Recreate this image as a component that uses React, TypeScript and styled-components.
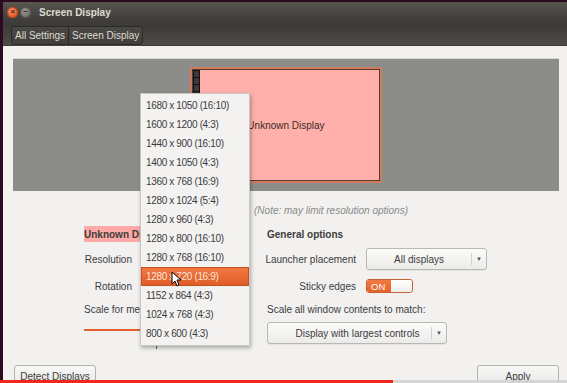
import React from 'react';
import styled, { createGlobalStyle } from 'styled-components';

const GlobalStyle = createGlobalStyle`
  html, body {
    margin: 0;
    padding: 0;
    overflow: hidden;
  }
  body {
    font-family: "Liberation Sans", Arial, sans-serif;
    font-size: 10px;
    color: #3c3c3c;
  }
`;

interface ICombo {
  width?: string;
  pad?: string;
}

const Desktop = styled.div`
  position: relative;
  width: 567px;
  height: 383px;
  overflow: hidden;
  background: #2c0a22;
  display: flex;
  padding: 2px 0 0 3px;
  box-sizing: border-box;
`;

const Window = styled.div`
  flex: 1;
  display: flex;
  flex-direction: column;
  background: #f2f1f0;
  margin-right: -1px;
`;

const TitleBar = styled.header`
  height: 46px;
  box-sizing: border-box;
  background: linear-gradient(#58564f 0%, #45433f 30%, #3c3b37 55%, #4e4c47 100%);
  border-bottom: 1px solid #3a3935;
  padding-left: 8px;
`;

const TitleRow = styled.div`
  height: 20px;
  display: flex;
  align-items: center;
  margin-left: -4px;
`;

const WinButton = styled.div<{ close?: boolean }>`
  width: 11px;
  height: 11px;
  border-radius: 50%;
  margin-right: 2px;
  display: flex;
  align-items: center;
  justify-content: center;
  background: ${p => p.close
    ? 'radial-gradient(circle at 40% 35%, #f8936a, #e4531f 70%)'
    : 'radial-gradient(circle at 40% 35%, #9a9892, #6f6d68 70%)'};
  box-shadow: inset 0 0 0 1px ${p => p.close ? '#b8441c' : '#55534e'};
  color: #3a2a20;
  font-size: 8px;
  font-weight: bold;
  line-height: 1;
`;

const Title = styled.span`
  margin-left: 6px;
  color: #dfdbd2;
  font-weight: bold;
  font-size: 10px;
`;

const Crumbs = styled.nav`
  margin-top: 4px;
  display: inline-flex;
  height: 19px;
  border: 1px solid #2b2a27;
  border-radius: 3px;
  box-sizing: border-box;
  background: linear-gradient(#4a4844, #403f3b);
  box-shadow: 0 1px 0 rgba(255,255,255,0.08);
`;

const Crumb = styled.span`
  display: flex;
  align-items: center;
  padding: 0 3px;
  color: #dfdbd2;
  & + & {
    border-left: 1px solid #2b2a27;
  }
`;

const Content = styled.main`
  flex: 1;
  display: flex;
  flex-direction: column;
  padding: 12px 9px 0 10px;
`;

const Preview = styled.section`
  height: 133px;
  box-sizing: border-box;
  background: #8c8c8b;
  border-top: 1px solid #d6d5d3;
  display: flex;
  align-items: center;
  justify-content: center;
`;

const Monitor = styled.div`
  width: 192px;
  height: 116px;
  box-sizing: border-box;
  background: #ffb0aa;
  border: 2px solid #cf7c5c;
  box-shadow: inset 0 0 0 1px #5a3a30;
  display: flex;
  position: relative;
  align-items: center;
  justify-content: center;
  color: #3c2a28;
`;

const Launcher = styled.div`
  position: absolute;
  left: 1px;
  top: 1px;
  width: 7px;
  display: flex;
  flex-direction: column;
  gap: 1px;
  background: #111;
  padding: 1px 0;
`;

const LaunchIcon = styled.div`
  height: 6px;
  margin: 0 1px;
  background: #3a3a3a;
`;

const MirrorRow = styled.div`
  margin-top: 11px;
  height: 16px;
  display: flex;
  align-items: center;
  padding-left: 150px;
  gap: 5px;
`;

const Check = styled.div`
  width: 12px;
  height: 12px;
  border: 1px solid #a8a6a2;
  border-radius: 2px;
  background: #fff;
`;

const Note = styled.span`
  margin-left: 2px;
  font-style: italic;
  color: #8a8987;
`;

const Columns = styled.div`
  margin-top: 8px;
  display: flex;
  padding-left: 71px;
  gap: 20px;
`;

const Grid = styled.div<{ cols: string; width?: string }>`
  width: ${p => p.width || 'auto'};
  display: grid;
  grid-template-columns: ${p => p.cols};
  grid-template-rows: 16px 22px 20px 14px 22px;
  row-gap: 6px;
  column-gap: 10px;
  align-items: center;
`;

const Header = styled.div<{ highlight?: boolean }>`
  grid-column: 1 / -1;
  font-weight: bold;
  height: 16px;
  display: flex;
  align-items: center;
  background: ${p => p.highlight ? '#ffaaa6' : 'transparent'};
`;

const Label = styled.div`
  justify-self: end;
  white-space: nowrap;
`;

const Wide = styled.div`
  grid-column: 1 / -1;
  white-space: nowrap;
`;

const ComboBox = styled.div<ICombo>`
  width: ${p => p.width || 'auto'};
  height: 22px;
  box-sizing: border-box;
  display: flex;
  border: 1px solid #bab8b4;
  border-radius: 3px;
  background: linear-gradient(#fbfbfa, #ecebe9);
  box-shadow: 0 1px 0 rgba(0,0,0,0.05);
`;

const ComboText = styled.div<ICombo>`
  flex: 1;
  display: flex;
  align-items: center;
  justify-content: center;
  padding-left: ${p => p.pad || '0'};
  white-space: nowrap;
  overflow: hidden;
`;

const ComboArrow = styled.div`
  width: 14px;
  margin: 4px 0;
  border-left: 1px solid #d4d2ce;
  display: flex;
  align-items: center;
  justify-content: center;
  color: #555;
  font-size: 6px;
`;

const Toggle = styled.div`
  width: 47px;
  height: 14px;
  box-sizing: border-box;
  display: flex;
  border: 1px solid #c7622f;
  border-radius: 3px;
  overflow: hidden;
`;

const ToggleOn = styled.div`
  width: 24px;
  background: linear-gradient(#f27a45, #e5602c);
  color: #fff;
  display: flex;
  align-items: center;
  padding-left: 4px;
  box-sizing: border-box;
  font-size: 9.5px;
`;

const ToggleKnob = styled.div`
  flex: 1;
  background: linear-gradient(#ffffff, #eeedeb);
  border-radius: 2px;
`;

const Slider = styled.div`
  grid-column: 1 / -1;
  align-self: start;
  display: flex;
  flex-direction: column;
`;

const Track = styled.div`
  margin-top: 7px;
  height: 2px;
  background: linear-gradient(to right, #e5602c 0 52%, #b8b6b2 52% 100%);
  width: 160px;
`;

const Tick = styled.div`
  margin: 12px 0 0 72px;
  width: 1px;
  height: 6px;
  background: #555;
`;

const ButtonRow = styled.footer`
  margin-top: 21px;
  display: flex;
  justify-content: space-between;
  padding-left: 1px;
`;

const Button = styled.button<{ width: string }>`
  width: ${p => p.width};
  height: 22px;
  font-family: inherit;
  font-size: 10px;
  color: #3c3c3c;
  border: 1px solid #b5b3ae;
  border-radius: 3px;
  background: linear-gradient(#f8f8f7, #e7e6e4);
  padding: 0;
`;

const Menu = styled.ul`
  position: absolute;
  left: 140px;
  top: 93px;
  width: 110px;
  margin: 0;
  padding: 2px 0;
  list-style: none;
  box-sizing: border-box;
  background: #f3f2f1;
  border: 1px solid #c9c7c3;
  box-shadow: 1px 2px 4px rgba(0,0,0,0.3);
`;

const Item = styled.li<{ active?: boolean }>`
  height: 19px;
  display: flex;
  align-items: center;
  padding-left: 5px;
  letter-spacing: -0.35px;
  white-space: nowrap;
  color: ${p => p.active ? '#fde6da' : '#3c3c3c'};
  background: ${p => p.active ? 'linear-gradient(#f27a45, #df5a26)' : 'transparent'};
  box-shadow: ${p => p.active ? 'inset 0 0 0 1px #c4531f' : 'none'};
`;

const Cursor = styled.svg`
  position: absolute;
  left: 171px;
  top: 271px;
`;

const Progress = styled.div`
  position: absolute;
  left: 0;
  right: 0;
  bottom: 0;
  height: 3px;
  display: flex;
  background: rgba(210, 210, 210, 0.85);
`;

const Played = styled.div<{ width: string }>`
  width: ${p => p.width};
  background: #f1261d;
`;

const resolutions = [
  '1680 x 1050 (16:10)',
  '1600 x 1200 (4:3)',
  '1440 x 900 (16:10)',
  '1400 x 1050 (4:3)',
  '1360 x 768 (16:9)',
  '1280 x 1024 (5:4)',
  '1280 x 960 (4:3)',
  '1280 x 800 (16:10)',
  '1280 x 768 (16:10)',
  '1280 x 720 (16:9)',
  '1152 x 864 (4:3)',
  '1024 x 768 (4:3)',
  '800 x 600 (4:3)',
];

const Combo = ({ text, width, pad }: { text: string; width?: string; pad?: string }) => (
  <ComboBox width={width}>
    <ComboText pad={pad}>{text}</ComboText>
    <ComboArrow>▼</ComboArrow>
  </ComboBox>
);

export default function App() {
  return (
    <>
      <GlobalStyle />
      <Desktop>
        <Window>
          <TitleBar>
            <TitleRow>
              <WinButton close>×</WinButton>
              <WinButton>−</WinButton>
              <Title>Screen Display</Title>
            </TitleRow>
            <Crumbs>
              <Crumb>All Settings</Crumb>
              <Crumb>Screen Display</Crumb>
            </Crumbs>
          </TitleBar>

          <Content>
            <Preview>
              <Monitor>
                <Launcher>
                  {[0, 1, 2, 3].map(i => <LaunchIcon key={i} />)}
                </Launcher>
                Unknown Display
              </Monitor>
            </Preview>

            <MirrorRow>
              <Check />
              <span>Mirror displays</span>
              <Note>(Note: may limit resolution options)</Note>
            </MirrorRow>

            <Columns>
              <Grid cols="48px 105px" width="163px">
                <Header highlight>Unknown Display</Header>
                <Label>Resolution</Label>
                <Combo text="1280 x 720 (16:9)" />
                <Label>Rotation</Label>
                <Combo text="Normal" />
                <Wide>Scale for menu and title bars:</Wide>
                <Slider>
                  <Track />
                  <Tick />
                </Slider>
              </Grid>

              <Grid cols="89px 121px">
                <Header>General options</Header>
                <Label>Launcher placement</Label>
                <Combo text="All displays" />
                <Label>Sticky edges</Label>
                <Toggle>
                  <ToggleOn>ON</ToggleOn>
                  <ToggleKnob />
                </Toggle>
                <Wide>Scale all window contents to match:</Wide>
                <Wide>
                  <Combo text="Display with largest controls" width="180px" pad="16px" />
                </Wide>
              </Grid>
            </Columns>

            <ButtonRow>
              <Button width="82px">Detect Displays</Button>
              <Button width="82px">Apply</Button>
            </ButtonRow>
          </Content>
        </Window>

        <Menu>
          {resolutions.map(r => (
            <Item key={r} active={r === '1280 x 720 (16:9)'}>{r}</Item>
          ))}
        </Menu>

        <Cursor width="10" height="16" viewBox="0 0 10 16">
          <path d="M1 1 L1 13 L4 10 L6 15 L8 14 L6 9 L10 9 Z" fill="#fff" stroke="#000" strokeWidth="1" strokeLinejoin="round" />
        </Cursor>

        <Progress>
          <Played width="393px" />
        </Progress>
      </Desktop>
    </>
  );
}
